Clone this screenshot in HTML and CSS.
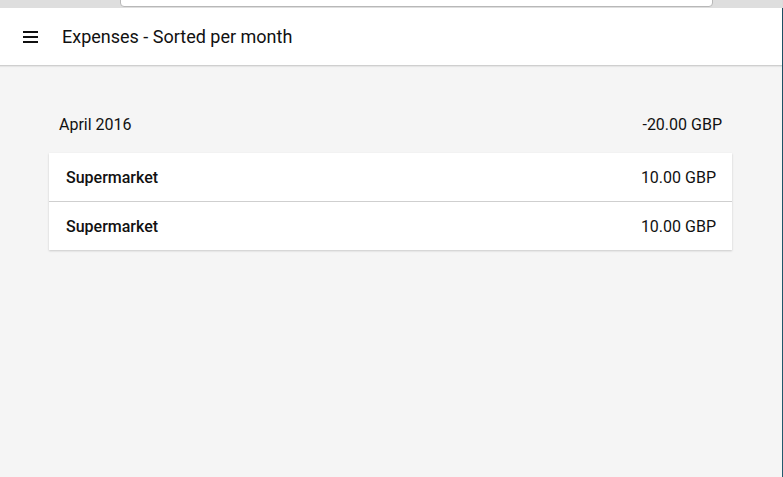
FILE: index.html
```html
<!DOCTYPE html>
<html>
<head>
<meta charset="utf-8">
<link rel="stylesheet" href="styles.css">
</head>
<body>
<div class="window">
  <div class="app">
    <div class="chrome"><div class="urlbar"></div></div>
    <header class="toolbar">
      <svg class="menu" width="15" height="12" viewBox="0 0 15 12"><rect x="0" y="0" width="15" height="2" fill="#111"/><rect x="0" y="5" width="15" height="2" fill="#111"/><rect x="0" y="10" width="15" height="2" fill="#111"/></svg>
      <h1 class="title">Expenses - Sorted per month</h1>
    </header>
    <main class="content">
      <div class="month">
        <span>April 2016</span>
        <span>-20.00 GBP</span>
      </div>
      <div class="card">
        <div class="row"><span class="name">Supermarket</span><span class="amount">10.00 GBP</span></div>
        <div class="row"><span class="name">Supermarket</span><span class="amount">10.00 GBP</span></div>
      </div>
    </main>
  </div>
  <div class="edge"></div>
</div>
</body>
</html>
```
FILE: styles.css
```css
html, body {
  margin: 0;
  padding: 0;
  height: 100%;
}
body {
  font-family: Roboto, "Liberation Sans", sans-serif;
  color: #111;
  background: #f5f5f5;
}
.window {
  display: flex;
  height: 477px;
  overflow: hidden;
}
.app {
  flex: 0 0 782px;
  display: flex;
  flex-direction: column;
  background: #f5f5f5;
}
.edge {
  flex: 1;
  background: linear-gradient(to bottom, #dcdcdc 0, #dcdcdc 8px, #1d4f63 8px, #235a6e 100%);
}
.chrome {
  height: 8px;
  background: #dedede;
  display: flex;
  padding-left: 120px;
  padding-right: 69px;
}
.urlbar {
  flex: 1;
  height: 6px;
  margin-top: -1px;
  background: #fff;
  border: 1px solid #b8b8b8;
  border-radius: 0 0 4px 4px;
}
.toolbar {
  height: 57px;
  background: #fff;
  border-bottom: 1px solid #cfcfcf;
  box-shadow: 0 1px 1px rgba(0,0,0,0.06);
  display: flex;
  align-items: center;
  padding-left: 23px;
}
.menu {
  display: block;
  margin-right: 24px;
}
.title {
  margin: 0;
  font-size: 18px;
  font-weight: 400;
  color: #111;
}
.content {
  padding: 36px 50px 0 49px;
}
.month {
  display: flex;
  justify-content: space-between;
  padding: 0 10px;
  height: 44px;
  align-items: center;
  font-size: 16px;
  margin-bottom: 7px;
}
.card {
  background: #fff;
  box-shadow: 0 1px 2px rgba(0,0,0,0.18);
}
.row {
  box-sizing: border-box;
  height: 48px;
  display: flex;
  justify-content: space-between;
  align-items: center;
  padding: 1px 16px 0 17px;
  font-size: 16px;
}
.row + .row {
  height: 49px;
  border-top: 1px solid #cfcfcf;
}
.name {
  font-weight: 500;
}
```
